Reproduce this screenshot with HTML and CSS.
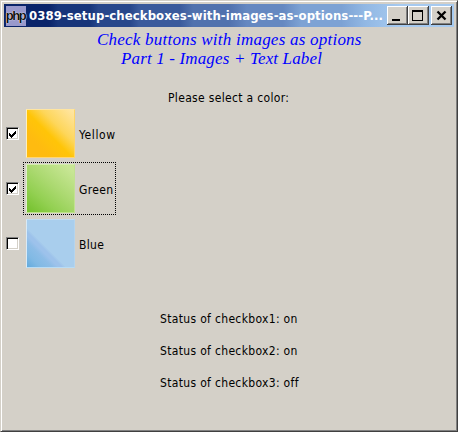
FILE: index.html
```html
<!DOCTYPE html>
<html lang="en">
<head>
<meta charset="utf-8">
<title>Check buttons</title>
<link rel="stylesheet" href="styles.css">
</head>
<body>
<div class="window">
  <header class="titlebar">
    <span class="php-icon">php</span>
    <span class="caption">0389-setup-checkboxes-with-images-as-options---P...</span>
    <div class="controls">
      <button class="control" aria-label="Minimize"><svg width="21" height="19" shape-rendering="crispEdges"><path d="M5 13h8v2H5z"/></svg></button>
      <button class="control" aria-label="Maximize"><svg width="21" height="19" shape-rendering="crispEdges"><path fill-rule="evenodd" d="M4 4h11v11H4zM5 6v8h9V6z"/></svg></button>
      <button class="control close" aria-label="Close"><svg width="21" height="19"><path d="M6.5 5.5l8 8M14.5 5.5l-8 8" fill="none" stroke="#000" stroke-width="2.3"/></svg></button>
    </div>
  </header>
  <main>
    <h1 class="heading"><span class="line-one">Check buttons with images as options</span><span class="line-two">Part 1 - Images + Text Label</span></h1>
    <p class="prompt">Please select a color:</p>
    <div class="options">
      <div class="option">
        <span class="box"><svg width="7" height="7" shape-rendering="crispEdges"><path d="M0 2h1v1h1v1h1V3h1V2h1V1h1V0h1v3H6v1H5v1H4v1H3v1H2V6H1V5H0z"/></svg></span>
        <span class="choice"><span class="swatch yellow"></span><span class="label yellow-label">Yellow</span></span>
      </div>
      <div class="option">
        <span class="box"><svg width="7" height="7" shape-rendering="crispEdges"><path d="M0 2h1v1h1v1h1V3h1V2h1V1h1V0h1v3H6v1H5v1H4v1H3v1H2V6H1V5H0z"/></svg></span>
        <span class="choice focused"><span class="swatch green"></span><span class="label">Green</span></span>
      </div>
      <div class="option">
        <span class="box"></span>
        <span class="choice"><span class="swatch blue"></span><span class="label">Blue</span></span>
      </div>
    </div>
    <div class="statuses">
      <p>Status of checkbox1: on</p>
      <p>Status of checkbox2: on</p>
      <p>Status of checkbox3: off</p>
    </div>
  </main>
</div>
</body>
</html>
```
FILE: styles.css
```css
* { box-sizing: border-box; }
body { margin: 0; background: #d4d0c8; overflow: hidden; }
p, h1 { margin: 0; }
.window {
  width: 458px; height: 432px; padding: 2px;
  background: #d4d0c8;
  border: 1px solid; border-color: #d4d0c8 #404040 #404040 #d4d0c8;
  box-shadow: inset 1px 1px #fff, inset -1px -1px #808080;
  font: 12px/16px "DejaVu Sans Condensed", "DejaVu Sans", sans-serif;
  font-stretch: condensed;
  letter-spacing: .33px;
  color: #000;
}
.titlebar {
  display: flex; align-items: center;
  height: 23px; margin: 1px; padding: 0 2px;
  background: linear-gradient(90deg, #0a246a 0 10%, #17357a 12% 19%, #28478b 21% 28%, #3a5a9c 30% 39%, #5172ae 42% 50%, #6588c1 54% 62%, #7da2d4 66% 75%, #91b7e3 80%, #a6caf0 88%);
}
.php-icon {
  width: 20px; height: 20px; flex: none;
  background: #9999cc; color: #111;
  font: bold 13px/19px "Liberation Sans", sans-serif;
  letter-spacing: -1.5px; text-align: center; text-indent: -1px;
  text-shadow: 0 0 1px #fff, 0 0 1px #fff;
}
.caption {
  flex: 1; margin-left: 3px; color: #fff;
  font-size: 13px; font-weight: bold; letter-spacing: .08px; white-space: nowrap;
}
.controls { display: flex; height: 19px; }
.control {
  width: 21px; height: 19px; padding: 0; border: 0;
  background: #d4d0c8;
  box-shadow: inset -1px -1px #404040, inset 1px 1px #fff, inset -2px -2px #808080;
}
.control svg { display: block; }
.close { margin-left: 2px; }
.heading {
  display: flex; flex-direction: column; align-items: flex-start;
  padding-top: 2px;
  font: italic 17px/19px "Liberation Serif", serif;
  color: #0000ff; white-space: nowrap;
}
.line-one { margin-left: 94px; letter-spacing: .23px; }
.line-two { margin-left: 118px; letter-spacing: .15px; }
.prompt { margin: 22px 0 0 165px; }
.option { display: flex; align-items: center; height: 55px; padding-left: 3px; }
.box {
  width: 13px; height: 13px; padding: 3px 0 0 2px;
  background: #fff;
  border: 1px solid; border-color: #808080 #fff #fff #808080;
  box-shadow: inset 1px 1px #000, inset -1px -1px #d4d0c8;
}
.box svg { display: block; }
.choice {
  display: flex; align-items: center;
  width: 93px; height: 53px; margin-left: 4px; padding-left: 2px;
  border: 1px solid transparent;
}
.focused { border: 1px dotted #000; }
.swatch { flex: none; width: 49px; height: 49px; border: 1px solid; }
.yellow { background: linear-gradient(45deg, #ffbb10 25%, #ffc508 48%, #fdd65a 65%, #ffe5a0 95%); border-color: #ffe5a0 #fdd568 #ffd674 #fff0bb; background-origin: border-box; }
.green { background: linear-gradient(40deg, #76c22f 5%, #93d052 30%, #abd970 55%, #c8e695 90%); border-color: #d3edae #c1e190 #bde389 #dff0ca; background-origin: border-box; }
.blue { background: linear-gradient(45deg, #64abdd 3%, #80b9e4 15%, #8dbde7 28%, #9dc2eb 34% 38%, #a9ceed 42%); border-color: #c1dcf2 #b4d4ee #b8dcf5 #d9eaf6; background-origin: border-box; }
.label { margin-left: 4px; padding-top: 3px; }
.yellow-label { letter-spacing: .6px; }
.statuses { display: grid; row-gap: 16px; margin: 40px 0 0 157px; }
```
